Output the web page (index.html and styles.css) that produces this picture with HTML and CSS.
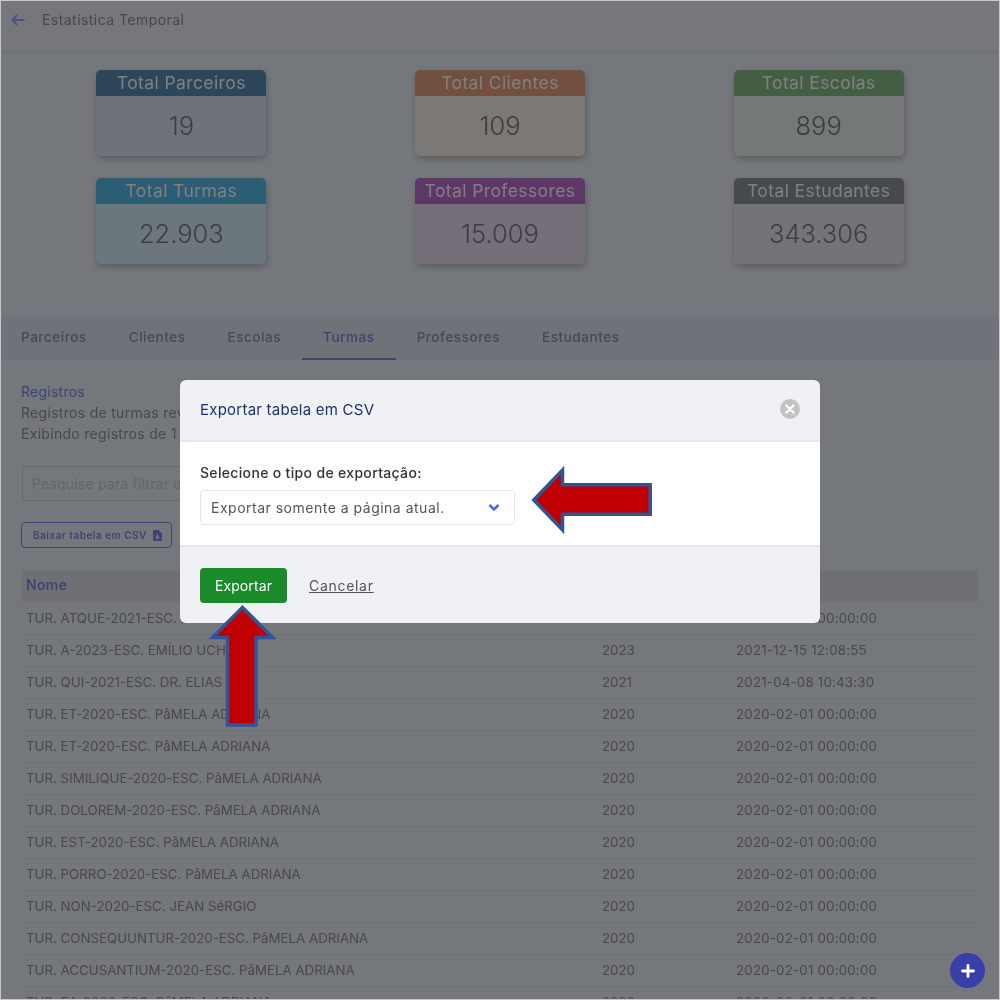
FILE: index.html
```html
<!DOCTYPE html>
<html lang="pt-BR">
<head>
    <meta charset="UTF-8">
    <meta name="viewport" content="width=device-width, initial-scale=1.0">
    <title>Estatística Temporal</title>
    <link rel="stylesheet" href="styles.css">
</head>
<body>
    <div class="page">
        <header class="topbar">
            <svg class="back-icon" width="14" height="12" viewBox="0 0 14 12"><path d="M6 1 1.500 6 6 11M2 6h11.500" fill="none" stroke="#98a4ff" stroke-width="2"/></svg>
            <span>Estatística Temporal</span>
        </header>

        <section class="stats">
            <div class="stat-card parceiros"><div class="stat-title">Total Parceiros</div><div class="stat-value">19</div></div>
            <div class="stat-card clientes"><div class="stat-title">Total Clientes</div><div class="stat-value">109</div></div>
            <div class="stat-card escolas"><div class="stat-title">Total Escolas</div><div class="stat-value">899</div></div>
            <div class="stat-card turmas"><div class="stat-title">Total Turmas</div><div class="stat-value">22.903</div></div>
            <div class="stat-card professores"><div class="stat-title">Total Professores</div><div class="stat-value">15.009</div></div>
            <div class="stat-card estudantes"><div class="stat-title">Total Estudantes</div><div class="stat-value">343.306</div></div>
        </section>

        <nav class="tabs">
            <a class="tab">Parceiros</a>
            <a class="tab">Clientes</a>
            <a class="tab">Escolas</a>
            <a class="tab active">Turmas</a>
            <a class="tab">Professores</a>
            <a class="tab">Estudantes</a>
        </nav>

        <main class="content">
            <h2 class="records-title">Registros</h2>
            <p class="records-text">Registros de turmas revisados.</p>
            <p class="records-text">Exibindo registros de 1 de 20.</p>

            <input class="search" type="text" placeholder="Pesquise para filtrar os registros">

            <button class="csv-btn">Baixar tabela em CSV
                <svg width="9" height="11" viewBox="0 0 9 11"><path d="M0 1a1 1 0 0 1 1-1h4.500L9 3.500V10a1 1 0 0 1-1 1H1a1 1 0 0 1-1-1z" fill="#7a88e8"/><path d="M4.500 4v4M2.800 6.500 4.500 8.500 6.200 6.500" fill="none" stroke="#e9eef7" stroke-width="1.200"/></svg>
            </button>

            <table class="records">
                <thead>
                    <tr><th>Nome</th><th>Ano</th><th>Criado em</th></tr>
                </thead>
                <tbody>
                    <tr><td>TUR. ATQUE-2021-ESC. PâMELA ADRIANA</td><td>2021</td><td>2020-02-01 00:00:00</td></tr>
                    <tr><td>TUR. A-2023-ESC. EMÍLIO UCHOA</td><td>2023</td><td>2021-12-15 12:08:55</td></tr>
                    <tr><td>TUR. QUI-2021-ESC. DR. ELIAS</td><td>2021</td><td>2021-04-08 10:43:30</td></tr>
                    <tr><td>TUR. ET-2020-ESC. PâMELA ADRIANA</td><td>2020</td><td>2020-02-01 00:00:00</td></tr>
                    <tr><td>TUR. ET-2020-ESC. PâMELA ADRIANA</td><td>2020</td><td>2020-02-01 00:00:00</td></tr>
                    <tr><td>TUR. SIMILIQUE-2020-ESC. PâMELA ADRIANA</td><td>2020</td><td>2020-02-01 00:00:00</td></tr>
                    <tr><td>TUR. DOLOREM-2020-ESC. PâMELA ADRIANA</td><td>2020</td><td>2020-02-01 00:00:00</td></tr>
                    <tr><td>TUR. EST-2020-ESC. PâMELA ADRIANA</td><td>2020</td><td>2020-02-01 00:00:00</td></tr>
                    <tr><td>TUR. PORRO-2020-ESC. PâMELA ADRIANA</td><td>2020</td><td>2020-02-01 00:00:00</td></tr>
                    <tr><td>TUR. NON-2020-ESC. JEAN SéRGIO</td><td>2020</td><td>2020-02-01 00:00:00</td></tr>
                    <tr><td>TUR. CONSEQUUNTUR-2020-ESC. PâMELA ADRIANA</td><td>2020</td><td>2020-02-01 00:00:00</td></tr>
                    <tr><td>TUR. ACCUSANTIUM-2020-ESC. PâMELA ADRIANA</td><td>2020</td><td>2020-02-01 00:00:00</td></tr>
                    <tr><td>TUR. EA-2020-ESC. PâMELA ADRIANA</td><td>2020</td><td>2020-02-01 00:00:00</td></tr>
                </tbody>
            </table>
        </main>
    </div>

    <div class="backdrop"></div>

    <button class="fab">
        <svg width="14" height="14" viewBox="0 0 14 14"><path d="M7 1.500v11M1.500 7h11" stroke="#fff" stroke-width="2.800" stroke-linecap="round"/></svg>
    </button>

    <div class="modal">
        <div class="modal-header">
            <h3>Exportar tabela em CSV</h3>
            <span class="modal-close">
                <svg width="10" height="10" viewBox="0 0 10 10"><path d="M1.500 1.500l7 7M8.500 1.500l-7 7" stroke="#fff" stroke-width="2.200" stroke-linecap="round"/></svg>
            </span>
        </div>
        <div class="modal-body">
            <label class="field-label">Selecione o tipo de exportação:</label>
            <div class="select">
                <span>Exportar somente a página atual.</span>
                <svg width="12" height="9" viewBox="0 0 12 9"><path d="M1.500 2 6 6.500 10.500 2" fill="none" stroke="#4f63f0" stroke-width="2.600"/></svg>
            </div>
        </div>
        <div class="modal-footer">
            <button class="export-btn">Exportar</button>
            <a class="cancel-link">Cancelar</a>
        </div>
    </div>

    <svg class="callout callout-left" width="124" height="70" viewBox="0 0 124 70">
        <path d="M3.800 35 32.500 5V19.750H120.250V49.250H32.500V65z" fill="#c00000" stroke="#2f5597" stroke-width="3.500"/>
    </svg>
    <svg class="callout callout-up" width="68" height="124" viewBox="0 0 68 124">
        <path d="M34.500 3.500 64.500 33.500H48V121H19.500V33.500H4.500z" fill="#c00000" stroke="#2f5597" stroke-width="3.500"/>
    </svg>
</body>
</html>
```

FILE: styles.css
```css
* {
    box-sizing: border-box;
}
html, body {
    margin: 0;
    height: 1000px;
    overflow: hidden;
}
body {
    font-family: "Inter", "Noto Sans", sans-serif;
    font-size: 14px;
    color: #8e9299;
    background-color: #e9eef7;
}
.page {
    height: 1000px;
    overflow: hidden;
    filter: blur(0.5px);
}

/* top */
.topbar {
    height: 50px;
    padding: 0 0 11px 11px;
    display: flex;
    align-items: center;
    gap: 17px;
    background-color: #eaeff5;
    box-shadow: 0 1px 4px rgba(0, 0, 0, 0.06);
    font-size: 14px;
    letter-spacing: 0.45px;
}
.stats {
    display: grid;
    grid-template-columns: repeat(3, 1fr);
    row-gap: 22px;
    padding: 20px 22px 0;
    height: 266px;
    justify-items: center;
    align-content: start;
}
.stat-card {
    width: 170px;
    height: 86px;
    border-radius: 5px;
    box-shadow: 1px 3px 6px rgba(0, 0, 0, 0.22);
    overflow: hidden;
    text-align: center;
}
.stat-title {
    height: 26px;
    line-height: 26px;
    font-size: 17.5px;
    letter-spacing: 0.4px;
    color: #fff;
}
.stat-value {
    height: 60px;
    line-height: 60px;
    font-size: 25.5px;
    font-weight: 300;
    color: #787c84;
}
.parceiros .stat-title { background-color: #588eb2; }
.parceiros { background-color: #dae4f6; }
.clientes .stat-title { background-color: #e69e80; }
.clientes { background-color: #f8f0ec; }
.escolas .stat-title { background-color: #86be86; }
.escolas { background-color: #e8f2ee; }
.turmas .stat-title { background-color: #56bdea; }
.turmas { background-color: #d8ecfa; }
.professores .stat-title { background-color: #bc6ed0; }
.professores { background-color: #eadff4; }
.estudantes .stat-title { background-color: #8c929c; }
.estudantes { background-color: #e4e8ee; }

/* tabs */
.tabs {
    height: 44px;
    display: flex;
    background-color: #dfe4f0;
}
.tab {
    padding: 0 21px;
    line-height: 42px;
    font-size: 13.5px;
    font-weight: 500;
    letter-spacing: 0.55px;
}
.tab.active {
    color: #7a88e8;
    border-bottom: 2px solid #7a88e8;
}

/* content */
.content {
    padding: 21px 21px 0 21px;
}
.records-title {
    margin: 0;
    font-size: 14px;
    line-height: 21px;
    font-weight: 400;
    letter-spacing: 0.25px;
    color: #7a88e8;
}
.records-text {
    margin: 0;
    line-height: 21px;
    letter-spacing: 0.3px;
}
.search {
    display: block;
    width: 420px;
    height: 35px;
    margin: 22px 0 21px 1px;
    padding: 0 9px;
    border: 1px solid #cbd0d8;
    border-radius: 4px;
    background-color: #e9eef7;
    font-family: inherit;
    font-size: 14px;
    letter-spacing: 0.2px;
}
.search::placeholder {
    color: #c6cad2;
}
.csv-btn {
    display: flex;
    align-items: center;
    gap: 6px;
    height: 26px;
    width: 151px;
    padding: 0 0 0 11px;
    border: 1px solid #7a88e8;
    border-radius: 4px;
    background: none;
    font-family: inherit;
    font-size: 10px;
    font-weight: 600;
    letter-spacing: 0.5px;
    color: #7a88e8;
}
.records {
    width: 956px;
    margin: 22px 0 0 1px;
    border-collapse: collapse;
    table-layout: fixed;
    font-size: 13.3px;
}
.records th {
    height: 32px;
    padding: 0 4px 3px;
    text-align: left;
    font-weight: 500;
    font-size: 14px;
    letter-spacing: 0.4px;
    color: #7580e0;
    background-color: #dce0ea;
}
.records th:nth-child(1) { width: 576px; }
.records th:nth-child(2) { width: 134px; }
.records td {
    height: 32px;
    padding: 0 4px;
    border-bottom: 1px solid #dde2ec;
    white-space: nowrap;
}
.records td:nth-child(3) {
    letter-spacing: 0.2px;
}

/* modal */
.backdrop {
    position: fixed;
    inset: 0;
    background-color: rgba(0, 0, 0, 0.5);
    border: 1px solid #c8c8c8;
}
.fab {
    position: fixed;
    left: 950px;
    top: 953px;
    width: 35px;
    height: 35px;
    padding: 0;
    border: none;
    border-radius: 50%;
    background-color: #3a3ea8;
    display: flex;
    align-items: center;
    justify-content: center;
}
.modal {
    position: fixed;
    left: 180px;
    top: 380px;
    width: 640px;
    height: 243px;
    border-radius: 6px;
    overflow: hidden;
    background-color: #eff1f5;
    filter: blur(0.3px);
}
.modal-header {
    height: 62px;
    padding: 0 20px 2px;
    display: flex;
    align-items: center;
    justify-content: space-between;
    border-bottom: 2px solid #e4e8f2;
}
.modal-header h3 {
    margin: 0;
    font-size: 15px;
    font-weight: 400;
    letter-spacing: 0.23px;
    color: #1c3370;
}
.modal-close {
    width: 20px;
    height: 20px;
    border-radius: 50%;
    background-color: #c3c3c3;
    display: flex;
    align-items: center;
    justify-content: center;
}
.modal-body {
    height: 105px;
    padding: 21px 20px 0;
    background-color: #fff;
    border-bottom: 2px solid #e4e8f2;
}
.field-label {
    display: block;
    font-size: 14px;
    line-height: 20px;
    font-weight: 500;
    letter-spacing: 0.33px;
    color: #333;
    margin-bottom: 7px;
}
.select {
    width: 315px;
    height: 35px;
    padding: 0 14px 0 10px;
    display: flex;
    align-items: center;
    justify-content: space-between;
    border: 1px solid #e2e5eb;
    border-radius: 4px;
    letter-spacing: 0.5px;
    color: #555;
}
.modal-footer {
    padding: 21px 20px 0;
    display: flex;
    align-items: center;
    gap: 22px;
}
.export-btn {
    width: 87px;
    height: 35px;
    padding: 0;
    border: none;
    border-radius: 4px;
    background-color: #1a8a2b;
    color: #fff;
    font-family: inherit;
    font-size: 14px;
    letter-spacing: 0.1px;
}
.cancel-link {
    color: #555;
    letter-spacing: 0.7px;
    text-decoration: underline;
}

/* red arrows on top of the screenshot */
.callout {
    position: fixed;
}
.callout-left {
    left: 530px;
    top: 465px;
}
.callout-up {
    left: 208px;
    top: 604px;
}
```
